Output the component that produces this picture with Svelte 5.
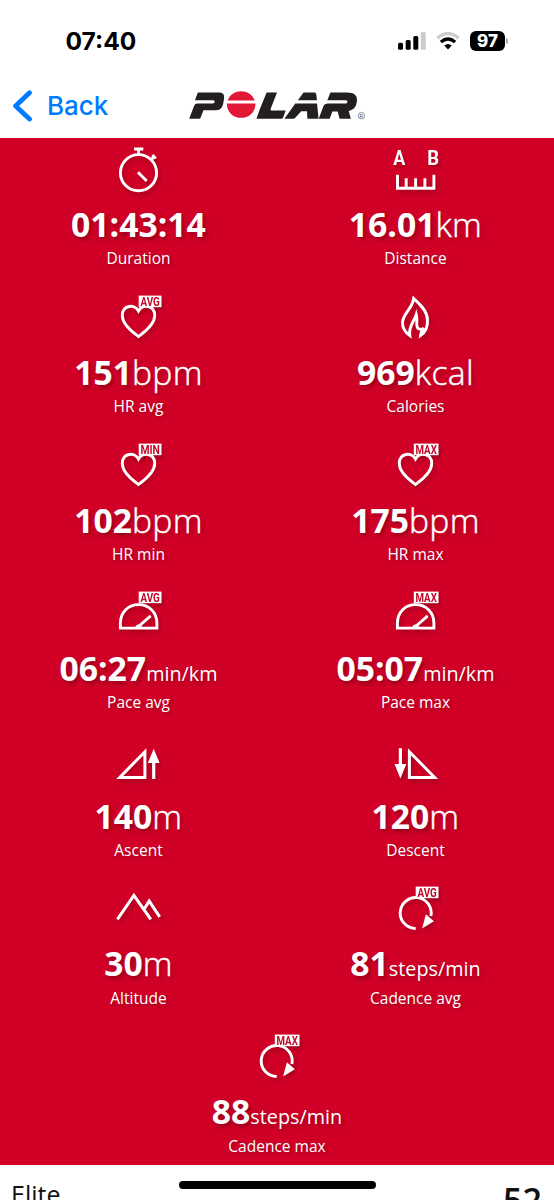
<script>
  const stats = [
    { icon: 'watch', value: '01:43:14', unit: '', label: 'Duration' },
    { icon: 'ruler', value: '16.01', unit: 'km', label: 'Distance' },
    { icon: 'heart', badge: 'AVG', value: '151', unit: 'bpm', label: 'HR avg' },
    { icon: 'flame', value: '969', unit: 'kcal', label: 'Calories' },
    { icon: 'heart', badge: 'MIN', value: '102', unit: 'bpm', label: 'HR min' },
    { icon: 'heart', badge: 'MAX', value: '175', unit: 'bpm', label: 'HR max' },
    { icon: 'gauge', badge: 'AVG', value: '06:27', unit: 'min/km', label: 'Pace avg' },
    { icon: 'gauge', badge: 'MAX', value: '05:07', unit: 'min/km', label: 'Pace max' },
    { icon: 'ascent', value: '140', unit: 'm', label: 'Ascent' },
    { icon: 'descent', value: '120', unit: 'm', label: 'Descent' },
    { icon: 'peaks', value: '30', unit: 'm', label: 'Altitude' },
    { icon: 'cadence', badge: 'AVG', value: '81', unit: 'steps/min', label: 'Cadence avg' },
    { icon: 'cadence', badge: 'MAX', value: '88', unit: 'steps/min', label: 'Cadence max' }
  ];
</script>

<div class="screen">
  <header class="status">
    <span class="time">07:40</span>
    <div class="indicators">
      <svg class="signal" width="28" height="18" viewBox="0 0 28 18">
        <rect x="0" y="10.7" width="5" height="7" rx="1.5" />
        <rect x="7.7" y="8" width="5" height="9.7" rx="1.5" />
        <rect x="15.3" y="4" width="5" height="13.7" rx="1.5" />
        <rect x="22.8" y="0" width="5" height="17.7" rx="1.5" fill="#ccc" />
      </svg>
      <svg class="wifi" width="24" height="18" viewBox="0 0 24 18">
        <path d="M1.4 6.2Q12-3 22.6 6.2" fill="none" stroke="#ccc" stroke-width="3.2" />
        <path d="M4.9 10Q12 4.1 19.1 10" fill="none" stroke="#000" stroke-width="3.3" />
        <path d="M8.2 13.5Q12 10.4 15.8 13.5L12 17.4Z" />
      </svg>
      <div class="battery">97</div>
      <i class="nub"></i>
    </div>
  </header>

  <nav>
    <div class="back">
      <svg width="20" height="32" viewBox="0 0 20 32"><path d="M16.5 2.8 2.6 16 16.5 29" fill="none" stroke="#007aff" stroke-width="4.8" stroke-linecap="round" stroke-linejoin="round" /></svg>
      <span>Back</span>
    </div>
    <svg class="logo" width="178" height="32" viewBox="0 0 180 32" preserveAspectRatio="none" role="img" aria-label="Polar">
      <g fill="#231f20">
        <path d="M9 3.4H31Q36.5 3.4 35.4 10L34.5 15Q33.2 21.3 27 21.3H14.6L11.8 28.6Q11.4 29.8 10 29.8H.2L5.2 16.8Q6 14.4 8.5 14.4H24.2Q25.7 14.4 25.9 13Q26.1 11.3 24.5 11.3H6Z" />
        <path d="M78.5 3.4H89L82.7 19.5Q81.9 21.5 84 21.5H97.8L95.2 28.5Q94.6 29.8 93 29.8H68.2L71.5 20.4Z" />
        <path d="M115.8 3.4H127Q128.4 3.4 128.6 5L129.4 11.2H110.1Z" />
        <path d="M107.5 14.4H129.5L131 29.8H119.7L119.3 22.2H113.5L107.7 28.6Q106.8 29.8 105 29.8H96.5Z" />
        <path d="M143 3.4H160Q170.8 3.4 169.8 12.5Q169 20.5 161.5 22L163.7 29.8H152.3L150.3 22.4H145L142.3 29.8H131.2L136 17Q137 14.4 140 14.4H158.5Q160.5 14.2 160.2 12.4Q160.1 11.2 158.4 11.2H139.9Z" />
      </g>
      <path d="M39.2 11.4C43.8-.7 61.6-.7 66.4 11.4ZM38.3 14.4H67.2C67.2 33.7 38.3 33.7 38.3 14.4Z" fill="#e31836" />
      <circle cx="174.3" cy="26.7" r="3.2" fill="none" stroke="#777" stroke-width=".8" />
      <text x="172.4" y="28.7" font-size="5.5" fill="#555">R</text>
    </svg>
  </nav>

  <main>
    {#each stats as s}
      <section>
        <svg class="icon" width="60" height="60" viewBox="0.5 0 60 60" fill="none" stroke="#fff" stroke-width="2.9">
          {#if s.icon === 'watch'}
            <circle cx="30" cy="34.7" r="18.1" />
            <path d="M25.5 11H34.8M30.1 11V17.5M42.6 21.8 45.7 18.6M43.8 17.1 47.3 20.5M29.5 34.3 38.2 43" />
          {:else if s.icon === 'ruler'}
            <g class="ends"><text x="7.7" y="27.3" textLength="12" lengthAdjust="spacingAndGlyphs">A</text><text x="41.7" y="27.3" textLength="11.8" lengthAdjust="spacingAndGlyphs">B</text></g>
            <path d="M12 36.7V50.2H48.4V36.7M20.7 40.2V50M30.1 40.2V50M39.4 40.2V50" />
          {:else if s.icon === 'heart'}
            <path d="M30 50.5C26 47.5 13.8 39.5 13.8 29.5C13.8 19.2 25.8 17.3 30 25C34.2 17.3 46.2 19.2 46.2 29.5C46.2 39.5 34 47.5 30 50.5Z" />
          {:else if s.icon === 'flame'}
            <path d="M24.3 49.6C20.6 47 16.9 42.5 17 36.5C17.3 27.5 26.8 23 28.2 12.5C33.8 17.5 42 25 42 34C42.3 41 39.5 46.5 35 49.6C35.3 46 36.5 44.5 38.3 42.2C34.5 44.5 31.7 43 31.3 39.3C31.1 35.8 31.9 32.8 30.8 28.5C28.6 36 22.6 40.5 24.3 49.6Z" />
          {:else if s.icon === 'gauge'}
            <path d="M11.9 46.1V41C11.9 30 20 22.6 30.1 22.6S48.4 30 48.4 41V46.1Z" />
            <path d="M30 44.5 42.2 33.8" /><path d="M26.8 46A3.4 3.4 0 0 1 33.6 46Z" fill="#fff" stroke="none" />
          {:else if s.icon === 'ascent'}
            <path d="M11.2 47.4H36.4V21.8Z" stroke-width="3" />
            <path d="M45.2 49V31" stroke-width="3.2" /><path d="M45.2 18.7 51.1 33H39.3Z" fill="#fff" stroke="none" />
          {:else if s.icon === 'descent'}
            <path d="M49.1 47.4H23.9V21.8Z" stroke-width="3" />
            <path d="M14.9 18.2V36" stroke-width="3.2" /><path d="M14.9 48.5 20.8 34H9Z" fill="#fff" stroke="none" />
          {:else if s.icon === 'peaks'}
            <path d="M8.9 42.3 25.4 18.3 42.3 42.3M35.8 31.8 40.7 24.1 51.2 39.8" stroke-width="3" />
          {:else if s.icon === 'cadence'}
            <path d="M30.2 51.5A15.5 15.5 0 1 1 45.4 39" />
            <path d="M36.6 51.6 40.4 37.3 48.4 44.2Z" fill="#fff" stroke="none" />
          {/if}
          {#if s.badge}
            {@const x = s.badge === 'MAX' ? 28.3 : 30.2}
            <rect {x} y="9.6" width={53 - x} height="11.6" fill="#fff" stroke="none" />
            <text class="badge" x={x + 1.7} y="19.5" textLength={53 - x - 3.4} lengthAdjust="spacingAndGlyphs">{s.badge}</text>
          {/if}
        </svg>
        <div class="value"><b>{s.value}</b><span class={s.unit.includes('/') ? 'small' : 'large'}>{s.unit}</span></div>
        <div class="label">{s.label}</div>
      </section>
    {/each}
  </main>

  <footer>
    <span class="level">Elite</span>
    <span class="score">52</span>
    <i class="home"></i>
  </footer>
</div>

<style>
  :global(body) { margin: 0; background: #fff; overflow: hidden; }
  .screen { width: 554px; height: 1200px; overflow: hidden; display: flex; flex-direction: column; background: #fff; font-family: "Open Sans", sans-serif; }
  .status { height: 75px; flex: none; display: flex; justify-content: space-between; align-items: flex-start; box-sizing: border-box; padding: 27px 46px 0 65.5px; }
  .time { font: 700 24.5px/29px Inter, sans-serif; }
  .indicators { display: flex; align-items: center; padding-top: 4px; height: 20px; }
  .wifi { margin-left: 10px; }
  .battery { margin-left: 10px; width: 35px; height: 20px; border-radius: 6px; background: #000; color: #fff; font: 800 17px/20px Inter, sans-serif; text-align: center; }
  .nub { width: 2px; height: 6px; margin-left: 1px; border-radius: 0 2px 2px 0; background: #aaa; }
  nav { height: 62.5px; flex: none; display: flex; align-items: flex-start; box-sizing: border-box; padding: 14px 0 0 13px; }
  .back { display: flex; align-items: center; width: 176px; gap: 14px; height: 34px; color: #007aff; font: 500 26px/34px Inter, sans-serif; }
  .logo { font-family: Roboto, sans-serif; }
  main { height: 1027.7px; flex: none; overflow: hidden; background: #d10027; color: #fff; display: flex; flex-wrap: wrap; justify-content: center; align-content: flex-start; box-sizing: border-box; padding-top: .5px; }
  section { width: 277px; height: 147.9px; display: flex; flex-direction: column; align-items: center; }
  .icon { flex: none; overflow: visible; filter: drop-shadow(2px 3px 2px rgba(80, 0, 15, .35)); }
  .ends { font: 700 20px Roboto, sans-serif; fill: #fff; stroke: none; }
  .badge { font: 700 12px Roboto, sans-serif; fill: #c00a28; stroke: none; }
  .value { height: 49.2px; line-height: 53px; font-size: 33.7px; white-space: nowrap; text-shadow: 2px 3px 4px rgba(80, 0, 15, .45); }
  .value b { font-weight: 700; }
  .large { font-weight: 300; letter-spacing: .35px; -webkit-text-stroke: .45px #fff; }
  .small { font-size: 19.8px; font-weight: 400; }
  .label { height: 22px; line-height: 22px; font-size: 15.5px; text-shadow: 2px 2px 3px rgba(80, 0, 15, .35); }
  footer { flex: 1; position: relative; display: flex; justify-content: space-between; padding: 13px 12px 0 11px; color: #111; }
  .level { font-size: 25px; line-height: 32px; }
  .score { font-size: 34px; line-height: 45px; font-weight: 600; }
  .home { position: absolute; left: 179px; top: 16px; width: 197px; height: 8px; border-radius: 4px; background: #000; }
</style>
